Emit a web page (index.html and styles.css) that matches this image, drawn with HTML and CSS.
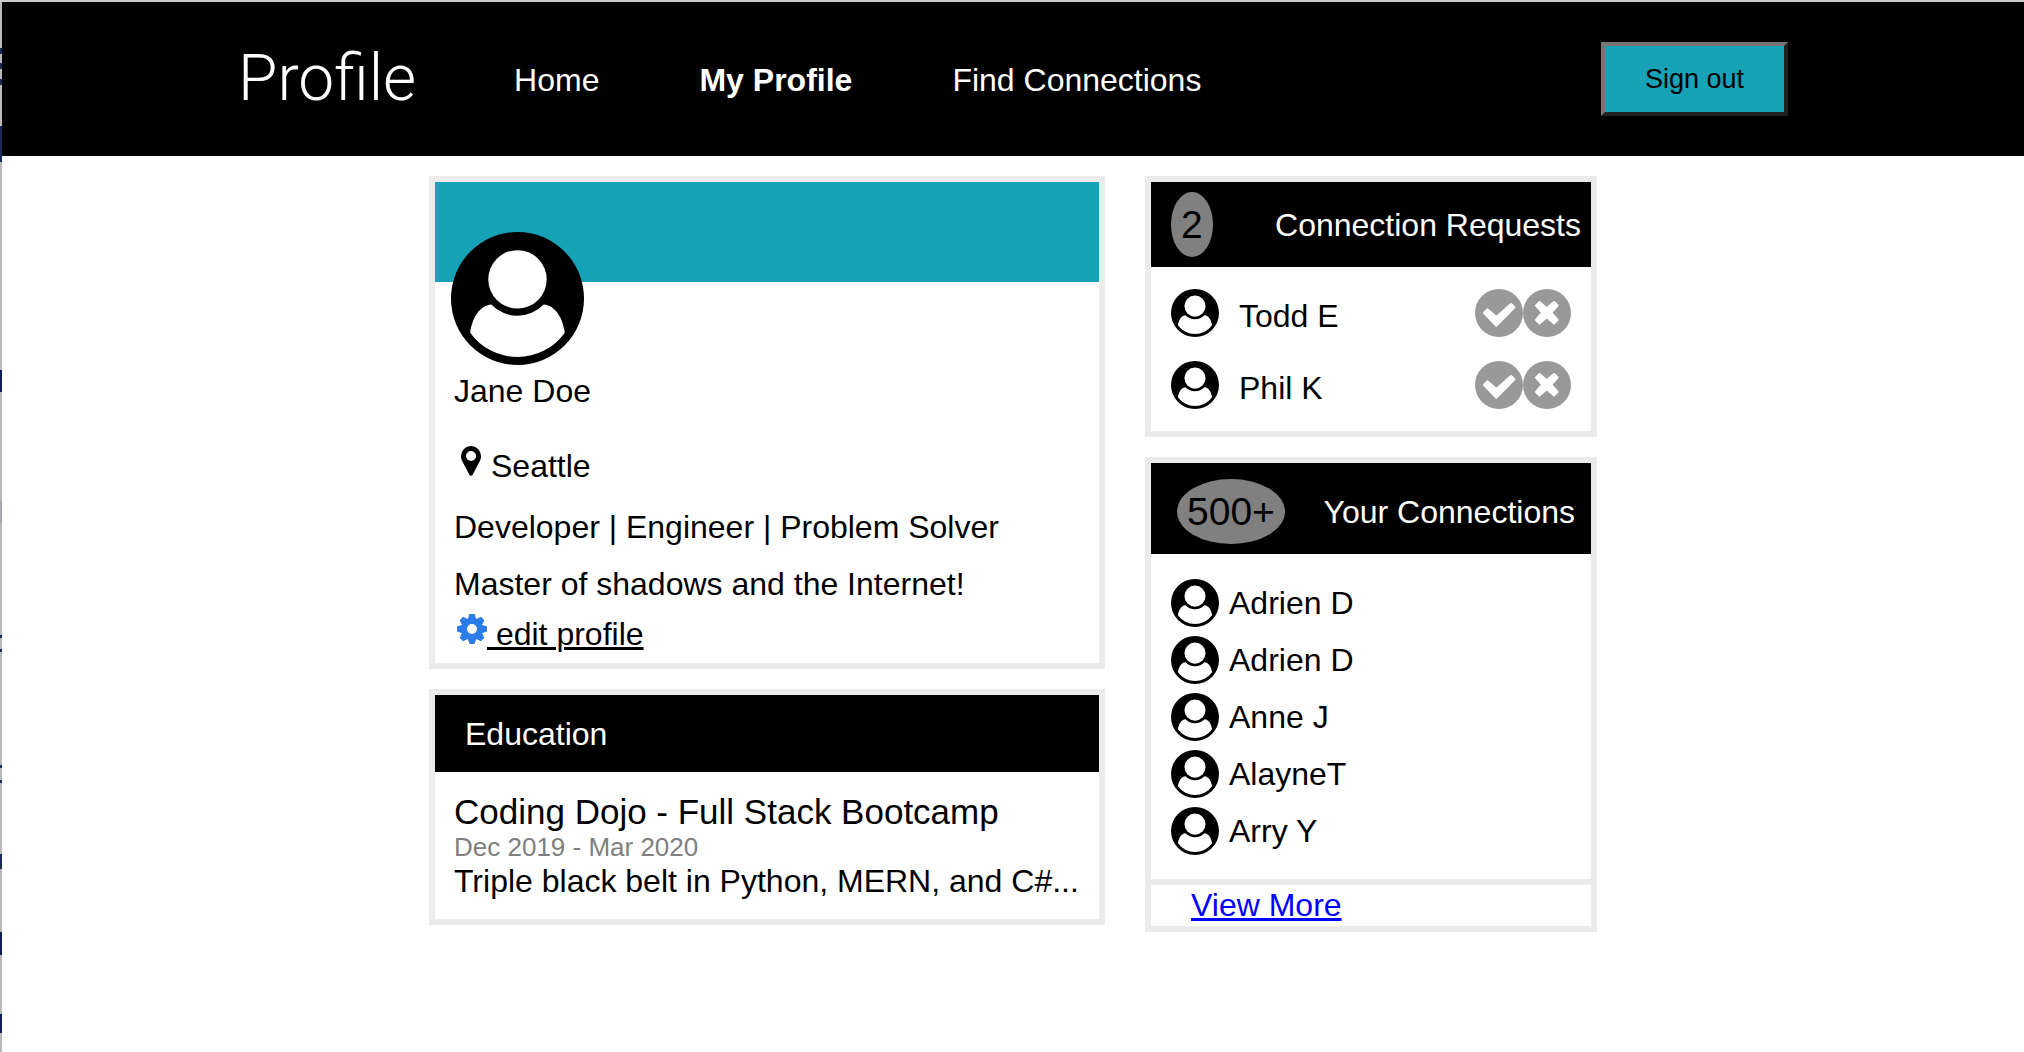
FILE: index.html
```html
<!DOCTYPE html>
<html lang="en">
<head>
<meta charset="utf-8">
<meta name="viewport" content="width=device-width, initial-scale=1">
<title>Profile</title>
<link rel="stylesheet" href="styles.css">
</head>
<body>
<svg class="sprite" aria-hidden="true">
  <symbol id="person" viewBox="0 0 132 132">
    <circle cx="66" cy="66" r="66"/>
    <circle cx="66" cy="47" r="29" fill="#fff"/>
    <path fill="#fff" d="M19 100C21 86 28 73 40 72A36 36 0 0 0 92 72C104 73 111 86 113 100A58 58 0 0 1 19 100Z"/>
  </symbol>
  <symbol id="check" viewBox="0 0 48 48">
    <circle cx="24" cy="24" r="24" fill="#999"/>
    <path fill="#fff" stroke="#fff" stroke-width="2" stroke-linejoin="round" d="M9 24L12.500 20.200L21.300 28L36 15L39.500 18.300L21.300 36.700Z"/>
  </symbol>
  <symbol id="cross" viewBox="0 0 48 48">
    <circle cx="24" cy="24" r="24" fill="#999"/>
    <path fill="#fff" stroke="#fff" stroke-width="2" stroke-linejoin="round" d="M13 16.500L16.500 13L23.700 19.200L31 13L34.500 16.500L28.300 23.700L34.500 31L31 34.500L23.700 28.300L16.500 34.500L13 31L19.200 23.700Z"/>
  </symbol>
</svg>

<header class="topbar">
  <h1 class="brand">Profile</h1>
  <nav class="nav">
    <a href="#">Home</a>
    <a href="#" class="active">My Profile</a>
    <a href="#">Find Connections</a>
  </nav>
  <button type="button" class="signout">Sign out</button>
</header>

<main class="layout">
  <div class="column">
    <section class="card">
      <div class="banner"></div>
      <svg class="portrait"><use href="#person"/></svg>
      <div class="about">
        <h2 class="name">Jane Doe</h2>
        <p class="place"><svg class="pin" viewBox="0 0 20 30"><path fill-rule="evenodd" d="M10 0A10 10 0 0 1 20 10C20 12 19.400 14 18.600 15.500L11.500 29C11 30 9 30 8.500 29L1.400 15.500C.600 14 0 12 0 10A10 10 0 0 1 10 0ZM10 5A5 5 0 1 0 10 15A5 5 0 1 0 10 5Z"/></svg>Seattle</p>
        <p class="headline">Developer | Engineer | Problem Solver</p>
        <p class="bio">Master of shadows and the Internet!</p>
        <a class="edit" href="#"><svg class="gear" viewBox="-15 -15 30 30"><g fill="#2b7ce9"><g id="teeth"><path id="t" d="M-4.500 -9L-2.500 -15H2.500L4.500 -9ZM-4.500 9L-2.500 15H2.500L4.500 9Z"/><use href="#t" transform="rotate(90)"/></g><use href="#teeth" transform="rotate(45)"/></g><circle r="8" fill="none" stroke="#2b7ce9" stroke-width="6"/></svg><span>&nbsp;edit profile</span></a>
      </div>
    </section>

    <section class="card">
      <h2 class="card-head education-head">Education</h2>
      <div class="education">
        <h3 class="school">Coding Dojo - Full Stack Bootcamp</h3>
        <p class="dates">Dec 2019 - Mar 2020</p>
        <p class="notes">Triple black belt in Python, MERN, and C#...</p>
      </div>
    </section>
  </div>

  <div class="column">
    <section class="card">
      <div class="card-head requests-head">
        <span class="badge">2</span>
        <h2>Connection Requests</h2>
      </div>
      <ul class="requests">
        <li>
          <svg class="icon"><use href="#person"/></svg>
          <span class="who">Todd E</span>
          <button type="button" aria-label="Accept Todd E"><svg class="icon"><use href="#check"/></svg></button>
          <button type="button" aria-label="Decline Todd E"><svg class="icon"><use href="#cross"/></svg></button>
        </li>
        <li>
          <svg class="icon"><use href="#person"/></svg>
          <span class="who">Phil K</span>
          <button type="button" aria-label="Accept Phil K"><svg class="icon"><use href="#check"/></svg></button>
          <button type="button" aria-label="Decline Phil K"><svg class="icon"><use href="#cross"/></svg></button>
        </li>
      </ul>
    </section>

    <section class="card">
      <div class="card-head connections-head">
        <span class="badge">500+</span>
        <h2>Your Connections</h2>
      </div>
      <ul class="connections">
        <li><svg class="icon"><use href="#person"/></svg>Adrien D</li>
        <li><svg class="icon"><use href="#person"/></svg>Adrien D</li>
        <li><svg class="icon"><use href="#person"/></svg>Anne J</li>
        <li><svg class="icon"><use href="#person"/></svg>AlayneT</li>
        <li><svg class="icon"><use href="#person"/></svg>Arry Y</li>
      </ul>
      <div class="more"><a href="#">View More</a></div>
    </section>
  </div>
</main>
</body>
</html>
```
FILE: styles.css
```css
* {
  box-sizing: border-box;
}

html {
  background:
    linear-gradient(#c8cbcb, #c8cbcb) 0 0 / 100% 2px no-repeat,
    linear-gradient(
      #b8b8b8 48px, #1a2b58 48px 54px, #b8b8b8 54px 63px,
      #1a2b58 63px 69px, #b8b8b8 69px 79px, #1a2b58 79px 85px,
      #b8b8b8 85px 126px, #1a2b58 126px 162px, #b8b8b8 162px 370px,
      #0c1f55 370px 392px, #b8b8b8 392px 501px, #a4a8b6 501px 523px,
      #b8b8b8 523px 635px, #1a2b58 635px 638px, #b8b8b8 638px 649px,
      #1a2b58 649px 652px, #b8b8b8 652px 765px, #1a2b58 765px 768px,
      #b8b8b8 768px 780px, #1a2b58 780px 783px, #b8b8b8 783px 854px,
      #1a2b58 854px 869px, #b8b8b8 869px 932px, #0c1f55 932px 955px,
      #b8b8b8 955px 1014px, #0c1f55 1014px 1033px, #b8b8b8 1033px
    ) 0 0 / 2px 100% no-repeat,
    #fff;
  min-height: 100%;
}

body {
  margin: 2px 0 0 2px;
  color: #000;
  font: 32px/36px "Liberation Sans", Arial, sans-serif;
}

h1, h2, h3, p, ul {
  margin: 0;
  padding: 0;
  font-size: inherit;
  font-weight: normal;
}

ul {
  list-style: none;
}

svg {
  display: block;
  flex: none;
}

.sprite {
  position: absolute;
  width: 0;
  height: 0;
}

/* Top bar */
.topbar {
  display: flex;
  align-items: center;
  min-height: 154px;
  padding: 0 236px;
  background: #000;
  color: #fff;
}

.brand {
  font: 300 64px/76px Roboto, "Liberation Sans", sans-serif;
}

.nav {
  display: flex;
  gap: 100px;
  margin: 0 auto 0 98px;
  padding-top: 2px;
}

.nav a {
  color: inherit;
  text-decoration: none;
}

.nav .active {
  font-weight: bold;
}

.signout {
  padding: 18px 40px;
  border: 4px solid;
  border-color: #767676 #212121 #212121 #767676;
  background: #17a2b8;
  color: #000;
  font: 27px/30px "Liberation Sans", Arial, sans-serif;
}

/* Page columns */
.layout {
  display: grid;
  grid-template-columns: 1fr 452px;
  gap: 40px;
  max-width: 1168px;
  margin: 20px auto;
}

.column {
  display: flex;
  flex-direction: column;
  gap: 20px;
}

.card {
  border: 6px solid #ebebeb;
  background: #fff;
}

.card-head {
  display: flex;
  align-items: center;
  background: #000;
  color: #fff;
}

/* Profile card */
.banner {
  height: 100px;
  background: #17a2b8;
}

.portrait {
  width: 133px;
  height: 133px;
  margin: -50px 0 8px 16px;
}

.about {
  padding: 0 19px 11px;
}

.name {
  margin-bottom: 39px;
}

.place {
  display: flex;
  margin-bottom: 25px;
}

.pin {
  width: 20px;
  height: 30px;
  margin: -2px 10px 0 7px;
}

.headline {
  margin-bottom: 21px;
}

.bio {
  margin-bottom: 13px;
}

.edit {
  display: inline-flex;
  color: #000;
  text-decoration: none;
}

.edit span {
  text-decoration: underline;
  text-decoration-thickness: 3px;
}

.gear {
  width: 30px;
  height: 30px;
  margin: -2px 0 0 3px;
}

/* Education card */
.education-head {
  min-height: 77px;
  padding: 0 30px;
}

.education {
  padding: 21px 19px 19px;
}

.school {
  font-size: 35px;
  line-height: 38px;
}

.dates {
  color: #808080;
  font-size: 26px;
  line-height: 32px;
}

.notes {
  line-height: 37px;
}

/* Connection cards */
.badge {
  padding: 10px;
  border-radius: 50%;
  background: #808080;
  color: #000;
  font-size: 39px;
  line-height: 45px;
}

.requests-head {
  justify-content: space-between;
  padding: 10px 10px 10px 20px;
}

.connections-head {
  justify-content: space-between;
  padding: 16px 16px 10px 26px;
}

.icon {
  width: 48px;
  height: 48px;
}

.requests {
  display: grid;
  gap: 24px;
  padding: 22px 20px;
}

.requests li {
  display: flex;
}

.requests .who {
  flex: 1;
  padding: 9px 20px 0;
}

.requests button {
  padding: 0;
  border: 0;
  background: none;
}

.connections {
  display: grid;
  gap: 9px;
  padding: 25px 20px 24px;
}

.connections li {
  display: flex;
  align-items: center;
  gap: 10px;
}

.more {
  padding: 2px 40px 3px;
  border-top: 6px solid #ebebeb;
}

.more a {
  color: #00f;
  text-decoration-thickness: 3px;
}
```
